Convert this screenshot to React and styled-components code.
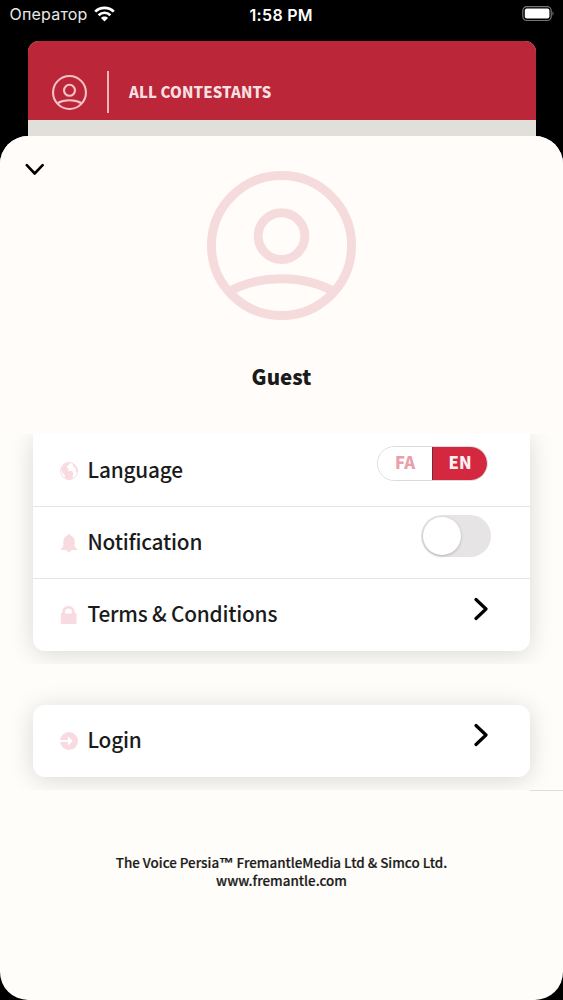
import React, { useState } from "react";
import styled, { createGlobalStyle } from "styled-components";

const COLORS = {
  bar: "#bb2639",
  accent: "#d3283f",
  pale: "#f6dbdd",
  icon: "#f8dbe0",
  text: "#1b1b1b",
  cream: "#fffdf9",
};

const GlobalStyle = createGlobalStyle`
  * {
    box-sizing: border-box;
  }
  body {
    margin: 0;
    background: #000;
    font-family: "Noto Sans CJK SC", "Open Sans", sans-serif;
    color: ${COLORS.text};
  }
`;

const Screen = styled.div`
  width: 563px;
  height: 1000px;
  display: flex;
  flex-direction: column;
  background: #000;
  overflow: hidden;
`;

const StatusBar = styled.div`
  height: 41px;
  display: grid;
  grid-template-columns: 1fr auto 1fr;
  align-items: start;
  padding: 5px 9px 0 9.5px;
  color: #fff;
  font-family: Inter, sans-serif;
  font-size: 16px;
  line-height: 20px;
`;

const Carrier = styled.div`
  display: flex;
  align-items: center;
  gap: 6px;
  margin-top: -1px;
  letter-spacing: 0.2px;
  color: #e8e8e8;
`;

const Clock = styled.div`
  margin-left: -1px;
  font-weight: 600;
  letter-spacing: 0.3px;
`;

const BatteryIcon = styled.svg`
  justify-self: end;
`;

const BackCard = styled.div`
  height: 95px;
  margin: 0 27px 0 28px;
  border-radius: 11px 11px 0 0;
  background: #e0dfd9;
  overflow: hidden;
`;

const BackHeader = styled.div`
  height: 78.5px;
  display: flex;
  align-items: flex-end;
  padding: 0 0 6.5px 23.5px;
  background: ${COLORS.bar};
`;

const Divider = styled.span`
  width: 1.5px;
  height: 42px;
  margin: 0 20.5px 0 20.5px;
  background: #efb5b8;
`;

const BackTitle = styled.span`
  color: #f8dfe0;
  font-size: 15px;
  font-weight: 900;
  line-height: 42px;
  letter-spacing: 0.08px;
`;

const BackAvatar = styled.span`
  display: flex;
  margin-bottom: 3.5px;
`;

const Sheet = styled.main`
  flex: 1;
  display: flex;
  flex-direction: column;
  border-radius: 28px;
  background: ${COLORS.cream};
  overflow: hidden;
`;

const Profile = styled.section`
  height: 298px;
  display: flex;
  flex-direction: column;
  align-items: center;
  background: #fffcfa;
`;

const SheetTop = styled.div`
  align-self: stretch;
  height: 35px;
  padding: 27px 0 0 25px;
  line-height: 0;
`;

const UserName = styled.h1`
  margin: 40px 0 0;
  font-size: 20.5px;
  line-height: 32px;
  font-weight: 900;
`;

const Group = styled.section`
  padding: ${(p) => (p.$first ? "0" : "41px")} 33px 13px;
  overflow: hidden;
`;

const Card = styled.div`
  padding-bottom: 1px;
  border-radius: ${(p) => (p.$first ? "0 0 12px 12px" : "12px")};
  background: #fff;
  box-shadow: 0 3px 24px rgba(0, 0, 0, 0.15);
`;

const Row = styled.div`
  height: ${(p) => (p.$single ? "71px" : "72px")};
  display: flex;
  align-items: center;
  padding: 0 39px 0 27px;
  & + & {
    border-top: 1px solid #e5e5e5;
  }
`;

const RowIcon = styled.svg`
  width: 18px;
  height: 18px;
  margin-top: 1px;
  fill: ${COLORS.icon};
`;

const RowLabel = styled.span`
  flex: 1;
  margin: -3px 0 0 9.5px;
  font-size: 20.8px;
  line-height: 32px;
  font-weight: 500;
  letter-spacing: -0.2px;
`;

const ChevronButton = styled.button`
  display: flex;
  margin: 0 3px 11px 0;
  padding: 0;
  border: 0;
  background: none;
`;

const LangToggle = styled.div`
  display: flex;
  align-self: flex-start;
  width: 111px;
  height: 35px;
  margin: 12px 3px 0 0;
  border: 1px solid #dddadb;
  border-radius: 18px;
  overflow: hidden;
`;

const LangOption = styled.button`
  flex: 1;
  padding: 0 0 2px;
  border: 0;
  border-left: ${(p) => (p.$active ? "1.5px solid #7d2736" : "0")};
  background: ${(p) => (p.$active ? COLORS.accent : "#fff")};
  color: ${(p) => (p.$active ? "#fdf1f2" : "#e8a0ab")};
  font-family: inherit;
  font-size: 16.5px;
  font-weight: 900;
  line-height: 31px;
`;

const Switch = styled.button`
  align-self: flex-start;
  display: flex;
  justify-content: ${(p) => (p.$on ? "flex-end" : "flex-start")};
  width: 70px;
  height: 42px;
  margin-top: 8px;
  padding: 2px;
  border: 0;
  border-radius: 21px;
  background: ${(p) => (p.$on ? COLORS.accent : "#e7e4e6")};
`;

const Knob = styled.span`
  width: 38px;
  height: 38px;
  border-radius: 50%;
  background: #fff;
  box-shadow: 0 1px 3px rgba(0, 0, 0, 0.22);
`;

const EdgeLine = styled.div`
  align-self: flex-end;
  width: 33px;
  height: 1px;
  background: #dfdedb;
`;

const Footer = styled.footer`
  margin-top: 62px;
  text-align: center;
  font-size: 13.4px;
  font-weight: 500;
  line-height: 18px;
  -webkit-text-stroke: 0.2px ${COLORS.text};
`;

const Trademark = styled.span`
  font-family: "Liberation Sans", sans-serif;
  font-size: 14.5px;
  font-weight: 700;
  line-height: 1;
`;

const Avatar = ({ size, color, stroke }) => (
  <svg width={size} height={size} viewBox="0 0 150 150" fill="none" stroke={color} strokeWidth={stroke}>
    <circle cx="75" cy="75" r={75 - stroke / 2} />
    <circle cx="75" cy="65.500" r="23.500" />
    <path d="M21 122C53 104 97 104 129 122" />
  </svg>
);

const WifiIcon = () => (
  <svg width="21" height="16" viewBox="0 0 21 16" fill="none" stroke="#fff" strokeWidth="2.700">
    <path d="M1.200 5.600C6.400.500 14.600.500 19.800 5.600" />
    <path d="M4.600 9.200C8 5.900 13 5.900 16.400 9.200" />
    <path d="M10.500 15.400L7 11.900C8.900 10.100 12.100 10.100 14 11.900Z" fill="#fff" stroke="none" />
  </svg>
);

const Chevron = () => (
  <svg width="14" height="24" viewBox="0 0 14 24" fill="none" stroke="#000" strokeWidth="3.200" strokeLinecap="round" strokeLinejoin="round">
    <path d="M2 2.500L12 12L2 21.500" />
  </svg>
);

const GlobeIcon = () => (
  <RowIcon viewBox="0 0 18 18">
    <circle cx="9" cy="9" r="8.500" fill="none" stroke={COLORS.icon} />
    <path d="M1 7L3 3.300L6 1.300L10 .700L9 2.800L6.800 4L7.200 5.800L8.500 7L8.200 9H12.300L13.300 11.500L12.300 17L8.500 17.600L5 16.300L4.800 13L2.500 11Z" />
    <path d="M12 1L15 3L17.300 7L17.400 10.500L15.700 9.500L15.800 6.500L13.500 4.500Z" />
  </RowIcon>
);

const BellIcon = () => (
  <RowIcon viewBox="0 0 18 18">
    <path d="M9 0C9.800 0 10.300.600 10.400 1.400C13 2.100 14.700 4.300 14.700 7.500V11.500C14.700 13 15.500 13.800 17 14.800V16H1V14.800C2.500 13.800 3.300 13 3.300 11.500V7.500C3.300 4.300 5 2.100 7.600 1.400C7.700.600 8.200 0 9 0ZM6.500 16H11.500C11.200 17.300 10.300 18 9 18S6.800 17.300 6.500 16Z" />
  </RowIcon>
);

const LockIcon = () => (
  <RowIcon viewBox="0 0 18 18">
    <path fillRule="evenodd" d="M2.300 7V6C2.300 2.500 5 0 8.500 0S14.700 2.500 14.700 6V7H15.500Q16.500 7 16.500 8V18H.800V8Q.800 7 1.800 7ZM5 7.500H12V6C12 3.900 10.500 2.500 8.500 2.500S5 3.900 5 6Z" />
  </RowIcon>
);

const LoginIcon = () => (
  <RowIcon viewBox="0 0 18 18">
    <circle cx="9" cy="9" r="9" />
    <path d="M0 9H11.500" stroke="#fff" strokeWidth="1.900" />
    <path d="M8 4.500V8L9 9L8 10V13.500L12.800 9Z" fill="#fff" />
  </RowIcon>
);

const App = () => {
  const [lang, setLang] = useState("EN");
  const [notify, setNotify] = useState(false);

  return (
    <Screen>
      <GlobalStyle />
      <StatusBar>
        <Carrier>
          Оператор
          <WifiIcon />
        </Carrier>
        <Clock>1:58 PM</Clock>
        <BatteryIcon width="32" height="17" viewBox="0 0 32 17">
          <rect x="0.800" y="1.700" width="28.400" height="13.800" rx="4" fill="none" stroke="#77777b" strokeWidth="1.200" />
          <rect x="2.800" y="3.600" width="24.600" height="10" rx="2" fill="#fff" />
          <path d="M30.500 6.500C32 7.200 32 10 30.500 10.700Z" fill="#77777b" />
        </BatteryIcon>
      </StatusBar>

      <BackCard>
        <BackHeader>
          <BackAvatar>
            <Avatar size={35} color="#f3c3c7" stroke={9} />
          </BackAvatar>
          <Divider />
          <BackTitle>ALL CONTESTANTS</BackTitle>
        </BackHeader>
      </BackCard>

      <Sheet>
        <Profile>
          <SheetTop>
            <svg width="20" height="13" viewBox="0 0 20 13" fill="none" stroke="#000" strokeWidth="2.600" strokeLinecap="round" strokeLinejoin="round">
              <path d="M1.800 2.200L9.700 10.500L17.600 2.200" />
            </svg>
          </SheetTop>
          <Avatar size={149} color={COLORS.pale} stroke={9} />
          <UserName>Guest</UserName>
        </Profile>

        <Group $first>
          <Card $first>
            <Row>
              <GlobeIcon />
              <RowLabel>Language</RowLabel>
              <LangToggle>
                {["FA", "EN"].map((l) => (
                  <LangOption key={l} $active={l === lang} onClick={() => setLang(l)}>
                    {l}
                  </LangOption>
                ))}
              </LangToggle>
            </Row>
            <Row>
              <BellIcon />
              <RowLabel>Notification</RowLabel>
              <Switch $on={notify} onClick={() => setNotify(!notify)}>
                <Knob />
              </Switch>
            </Row>
            <Row>
              <LockIcon />
              <RowLabel>Terms &amp; Conditions</RowLabel>
              <ChevronButton>
                <Chevron />
              </ChevronButton>
            </Row>
          </Card>
        </Group>

        <Group>
          <Card>
            <Row $single>
              <LoginIcon />
              <RowLabel>Login</RowLabel>
              <ChevronButton>
                <Chevron />
              </ChevronButton>
            </Row>
          </Card>
        </Group>
        <EdgeLine />

        <Footer>
          The Voice Persia<Trademark>™</Trademark> FremantleMedia Ltd &amp; Simco Ltd.
          <br />
          www.fremantle.com
        </Footer>
      </Sheet>
    </Screen>
  );
};

export default App;
